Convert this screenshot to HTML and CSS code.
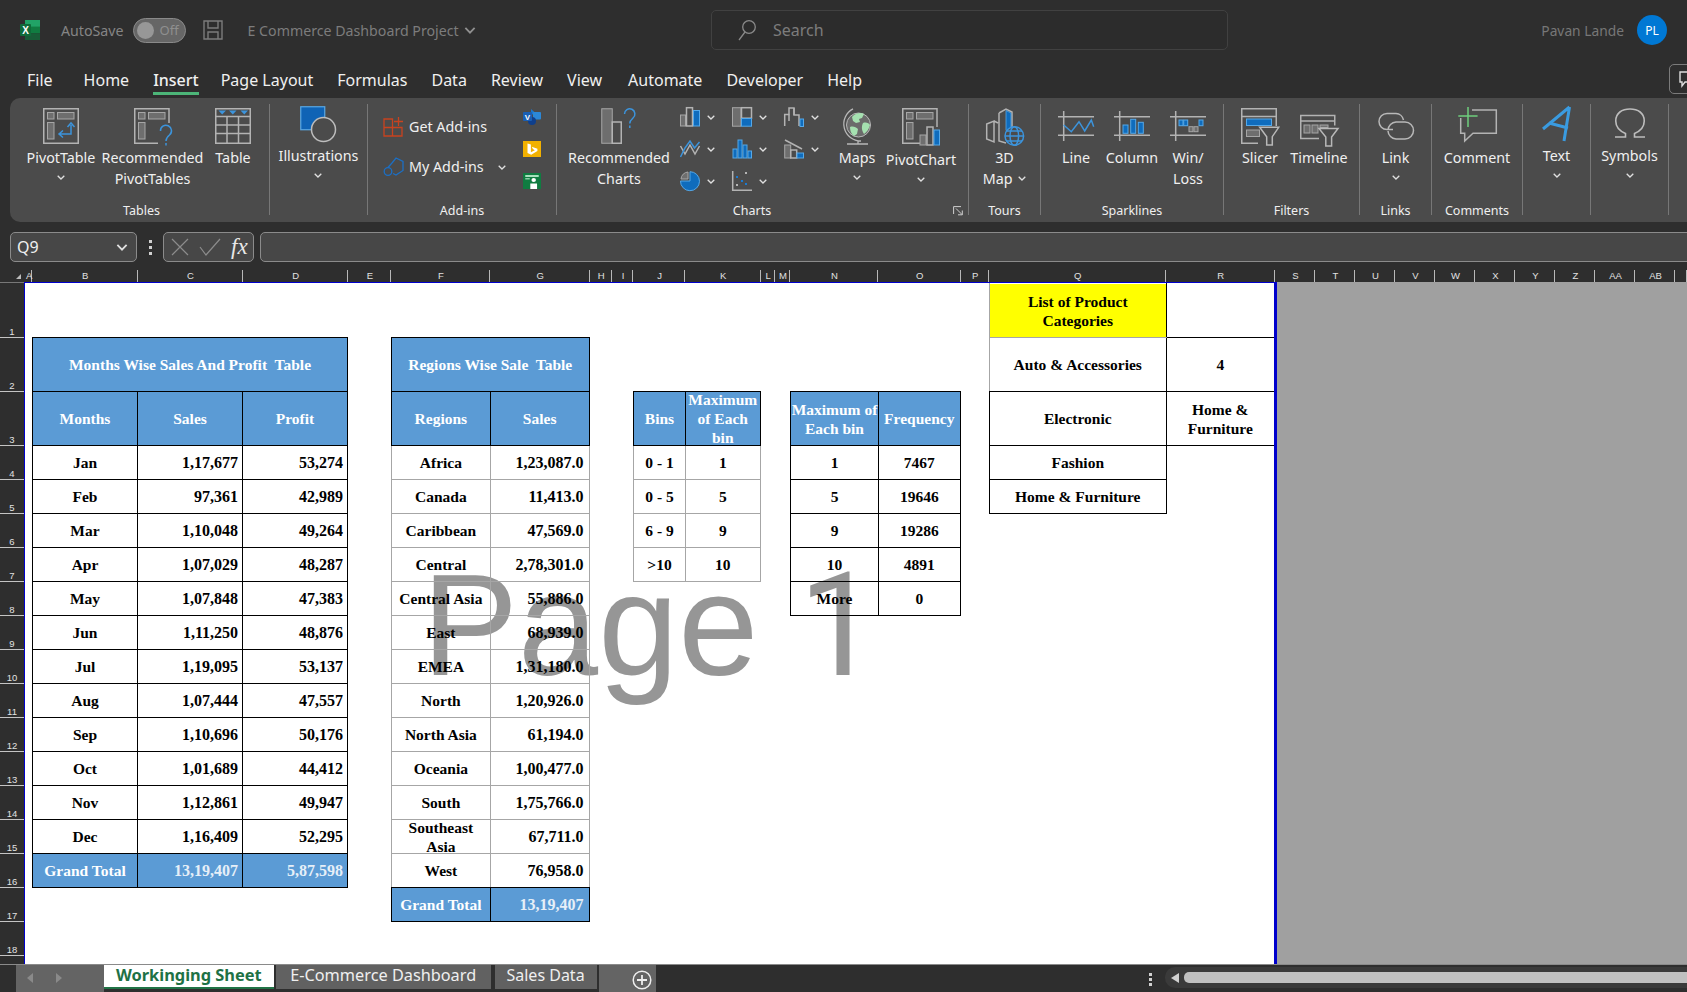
FILE: index.html
```html
<!DOCTYPE html>
<html lang="en">
<head>
    <meta charset="UTF-8">
    <title>E Commerce Dashboard Project - Excel</title>
    <link rel="stylesheet" href="styles.css">
</head>
<body>
    <svg class="defs">
        <symbol id="chev" viewBox="0 0 8 5"><path d="M.7.7 4 4l3.3-3.3" fill="none" stroke="#e0e0e0" stroke-width="1.3"/></symbol>
    </svg>

    <!-- title bar -->
    <header class="titlebar">
        <svg class="logo" viewBox="0 0 20 20" width="20" height="20">
            <rect x="5" y="0" width="15" height="7" fill="#21a366"/>
            <rect x="5" y="6.6" width="15" height="6.8" fill="#107c41"/>
            <rect x="5" y="13.3" width="15" height="6.7" fill="#185c37"/>
            <rect x="0" y="4" width="11" height="12" rx="1" fill="#0f6b3a"/>
            <text x="5.5" y="13.5" text-anchor="middle" class="logo-x">X</text>
        </svg>
        <span class="autosave">AutoSave</span>
        <div class="toggle"><i class="knob"></i><span>Off</span></div>
        <svg class="save" viewBox="0 0 20 20" width="20" height="20">
            <path d="M1 1h18v18H1zM5 1v7h10V1M5 19v-7h10v7" fill="none" stroke="#7c7c7c" stroke-width="1.4"/>
        </svg>
        <span class="doc-title">E Commerce Dashboard Project</span>
        <svg class="doc-chev" width="12" height="7"><use href="#chev"/></svg>
        <div class="searchbox">
            <svg viewBox="0 0 20 22" width="20" height="22">
                <circle cx="12" cy="8" r="6.3" fill="none" stroke="#8a8a8a" stroke-width="1.3"/>
                <path d="M8 13 2 21" stroke="#8a8a8a" stroke-width="1.3"/>
            </svg>
            <span>Search</span>
        </div>
        <span class="username">Pavan Lande</span>
        <div class="avatar">PL</div>
    </header>

    <!-- ribbon tabs -->
    <nav class="tabs">
        <span class="tab">File</span>
        <span class="tab t-home">Home</span>
        <span class="tab active">Insert</span>
        <span class="tab">Page Layout</span>
        <span class="tab">Formulas</span>
        <span class="tab">Data</span>
        <span class="tab">Review</span>
        <span class="tab">View</span>
        <span class="tab t-auto">Automate</span>
        <span class="tab">Developer</span>
        <span class="tab">Help</span>
        <div class="comment-btn">
            <svg viewBox="0 0 18 18" width="18" height="18"><path d="M1 2h15v10H6l-3 4v-4H1z" fill="none" stroke="#ddd" stroke-width="1.4"/></svg>
        </div>
    </nav>

    <!-- ribbon -->
    <section class="ribbon">
        <div class="group g-tables">
            <div class="cmds">
                <div class="cmd c-pivot">
                    <div class="ico">
                        <svg viewBox="0 0 36 38" width="36" height="38">
                            <rect x=".75" y=".75" width="34.5" height="34.5" class="g"/>
                            <rect x="4.5" y="4.5" width="6.5" height="6.5" class="gf"/>
                            <rect x="14.5" y="4.5" width="16.5" height="6.5" class="gf"/>
                            <rect x="4.5" y="14.5" width="6.5" height="16.5" class="gf"/>
                            <path d="M28 17v9H17M24.5 19 28 15l3.5 4M20 22.500 16 26l4 3.500" class="b"/>
                        </svg>
                    </div>
                    <span class="label">PivotTable</span>
                    <svg class="chev" width="8" height="5"><use href="#chev"/></svg>
                </div>
                <div class="cmd c-reco">
                    <div class="ico">
                        <svg viewBox="0 0 38 38" width="38" height="38">
                            <path d="M35 15V.75H.75v34.5H24" class="g"/>
                            <rect x="4.5" y="4.5" width="6.5" height="6.5" class="gf"/>
                            <rect x="14.5" y="4.5" width="16.5" height="6.5" class="gf"/>
                            <rect x="4.5" y="14.5" width="6.5" height="16.5" class="gf"/>
                            <path d="M26.5 23a5.5 5.5 0 1 1 9 4c-2.5 2-3.5 3.5-3.5 6M32 35v2.500" class="b"/>
                        </svg>
                    </div>
                    <span class="label">Recommended<br>PivotTables</span>
                </div>
                <div class="cmd c-table">
                    <div class="ico">
                        <svg viewBox="0 0 36 38" width="36" height="38">
                            <rect x=".75" y=".75" width="34.5" height="34.5" class="g"/>
                            <path d="M1 8.500h34M1 17h34M1 25.500h34M12 8.500v27M23.500 8.500v27" class="g"/>
                            <path d="M3.500 2.500h7.500L7.200 6.500zM14 2.500h7.500l-3.700 4zM25.500 2.500H33l-3.700 4z" fill="#3c94dc"/>
                        </svg>
                    </div>
                    <span class="label">Table</span>
                </div>
            </div>
            <div class="group-label">Tables</div>
        </div>
        <div class="sep"></div>

        <div class="group g-illus">
            <div class="cmds high">
                <div class="cmd c-illus">
                    <div class="ico">
                        <svg viewBox="0 0 36 38" width="36" height="38">
                            <rect x=".75" y=".75" width="24" height="23" fill="#0f63b5" stroke="#5ba8e5" stroke-width="1.2"/>
                            <circle cx="23.500" cy="23.500" r="12" fill="#4b4b4b" stroke="#bdbdbd" stroke-width="1.5"/>
                        </svg>
                    </div>
                    <span class="label">Illustrations</span>
                    <svg class="chev" width="8" height="5"><use href="#chev"/></svg>
                </div>
            </div>
        </div>
        <div class="sep"></div>

        <div class="group g-addins">
            <div class="cmds">
                <div class="addin-list">
                    <div class="addin-row">
                        <svg viewBox="0 0 21 20" width="21" height="20">
                            <path d="M1 2h8.500v17H1zM1 10.500h18V19H9.500M15.500 0v9M11 4.500h9" fill="none" stroke="#c8431f" stroke-width="1.3"/>
                        </svg>
                        <span>Get Add-ins</span>
                    </div>
                    <div class="addin-row">
                        <svg viewBox="0 0 21 20" width="21" height="20">
                            <path d="M9 6 13 1l7 3.500v9L13 18l-3-1.500" fill="none" stroke="#1c6fc4" stroke-width="1.3"/>
                            <circle cx="5" cy="14.500" r="3.800" fill="none" stroke="#1c6fc4" stroke-width="1.3"/>
                            <path d="M5 10.500 9 6" stroke="#1c6fc4" stroke-width="1.3"/>
                        </svg>
                        <span>My Add-ins</span>
                        <svg class="chev-side" width="8" height="5"><use href="#chev"/></svg>
                    </div>
                </div>
                <div class="addin-apps">
                    <svg viewBox="0 0 18 16" width="18" height="16">
                        <path d="M8 0l4 3.500-4 3z" fill="#1b77cf"/>
                        <rect x="10" y="3" width="8" height="7.500" rx="1" fill="#2b88d8"/>
                        <circle cx="9" cy="12" r="4" fill="#0f3f8c"/>
                        <rect x="0" y="3" width="9" height="9" rx="1" fill="#1a5fb4"/>
                        <text x="4.500" y="10.500" text-anchor="middle" class="app-v">V</text>
                    </svg>
                    <svg viewBox="0 0 16 16" width="18" height="16" preserveAspectRatio="none">
                        <rect width="16" height="16" fill="#f2b100"/>
                        <path d="M4 2.500 7 3.500v7.700l3.500-2L8.800 8 7.800 5.700l5 2V10l-5.500 3.800L4 12z" fill="#fff"/>
                    </svg>
                    <svg viewBox="0 0 16 16" width="18" height="16" preserveAspectRatio="none">
                        <rect width="16" height="16" fill="#107c41"/>
                        <rect x="2" y="2" width="12" height="2" fill="#a8e0bd"/>
                        <rect x="2" y="5.200" width="4" height="1.200" fill="#a8e0bd"/>
                        <circle cx="9.500" cy="7" r="2" fill="#fff"/>
                        <path d="M6.500 16v-5.500h6V16z" fill="#fff"/>
                    </svg>
                </div>
            </div>
            <div class="group-label">Add-ins</div>
        </div>
        <div class="sep"></div>

        <div class="group g-charts">
            <div class="cmds">
                <div class="cmd c-recochart">
                    <div class="ico">
                        <svg viewBox="0 0 36 38" width="36" height="38">
                            <rect x=".75" y=".75" width="10.5" height="34.5" class="gf"/>
                            <rect x="11.250" y="14" width="9" height="21.250" class="g"/>
                            <path d="M23.500 6a5.200 5.200 0 1 1 8.500 4c-2.300 2-3.200 3.200-3.200 5.500M28.800 17.500v2.500" class="b"/>
                        </svg>
                    </div>
                    <span class="label">Recommended<br>Charts</span>
                </div>
                <div class="gallery">
                    <div class="gal-item">
                        <svg viewBox="0 0 20 20" width="20" height="20">
                            <rect x=".5" y="8" width="5" height="11" class="gf"/><rect x="6.500" y=".7" width="6" height="18.300" class="g"/><rect x="13.500" y="3.500" width="6" height="15.500" class="bf"/>
                        </svg>
                        <svg class="chev" width="8" height="5"><use href="#chev"/></svg>
                    </div>
                    <div class="gal-item">
                        <svg viewBox="0 0 20 20" width="20" height="20">
                            <rect x=".5" y=".7" width="8.500" height="18.500" class="gf"/><rect x="9.500" y=".7" width="10" height="10.500" class="g"/><rect x="9.500" y="11.500" width="10" height="7.700" class="bf"/>
                        </svg>
                        <svg class="chev" width="8" height="5"><use href="#chev"/></svg>
                    </div>
                    <div class="gal-item">
                        <svg viewBox="0 0 20 20" width="20" height="20">
                            <path d="M.7 19V7.500H5V1h5v7h5v11" class="g"/><path d="M5 7.500V14M10 8V1" class="g"/><rect x="16" y="12" width="3.500" height="7.500" class="bf"/>
                        </svg>
                        <svg class="chev" width="8" height="5"><use href="#chev"/></svg>
                    </div>
                    <div class="gal-item">
                        <svg viewBox="0 0 20 20" width="20" height="20">
                            <path d="M.5 7 5 15l5-9 5 9 4.500-8" class="g"/><path d="M.5 18 5 9l5-7 4.500 7 5-6" class="b"/>
                        </svg>
                        <svg class="chev" width="8" height="5"><use href="#chev"/></svg>
                    </div>
                    <div class="gal-item">
                        <svg viewBox="0 0 20 20" width="20" height="20">
                            <rect x="1" y="10" width="4" height="9" class="bf"/><rect x="6" y="1" width="4" height="18" class="bf"/><rect x="11" y="6" width="4" height="13" class="bf"/><rect x="16" y="12" width="3.500" height="7" class="bf"/>
                        </svg>
                        <svg class="chev" width="8" height="5"><use href="#chev"/></svg>
                    </div>
                    <div class="gal-item">
                        <svg viewBox="0 0 20 20" width="20" height="20">
                            <rect x=".7" y="6" width="6" height="13" class="gf"/><rect x="6.700" y="11" width="6" height="8" class="g"/><rect x="13" y="14" width="6.500" height="5" class="bf"/><path d="M1 1 18 10" class="g"/>
                        </svg>
                        <svg class="chev" width="8" height="5"><use href="#chev"/></svg>
                    </div>
                    <div class="gal-item">
                        <svg viewBox="0 0 20 20" width="20" height="20">
                            <path d="M10 10V.7A9.500 9.500 0 1 1 .5 10z" fill="#0f6cbd" stroke="#55a8e8"/>
                            <path d="M8 8V1A7.500 7.500 0 0 0 1 8z" class="gf"/>
                        </svg>
                        <svg class="chev" width="8" height="5"><use href="#chev"/></svg>
                    </div>
                    <div class="gal-item">
                        <svg viewBox="0 0 20 20" width="20" height="20">
                            <path d="M.7 0v19.300H20" class="g"/>
                            <rect x="4" y="5" width="2" height="2" fill="#1c7ad0"/><rect x="9" y="9" width="2" height="2" fill="#1c7ad0"/><rect x="13" y="1" width="2" height="2" fill="#b5b5b5"/><rect x="4" y="13" width="2" height="2" fill="#b5b5b5"/><rect x="13" y="12" width="2" height="2" fill="#1c7ad0"/>
                        </svg>
                        <svg class="chev" width="8" height="5"><use href="#chev"/></svg>
                    </div>
                    <div class="gal-empty"></div>
                </div>
                <div class="cmd c-maps">
                    <div class="ico">
                        <svg viewBox="0 0 29 38" width="29" height="38">
                            <circle cx="15.500" cy="17" r="12" fill="#6b6b6b" stroke="#b8b8b8"/>
                            <path d="M9 9c3-4 9-5 12-3l-2 4-3 1 1 3-4 1-3-2zM20 15c3-1 6 0 7 2-1 4-3 7-6 9-2-3-3-7-1-11zM7 19c3-1 6 0 8 2l-1 5-3 2c-3-2-4-6-4-9z" fill="#a5e0b0"/>
                            <path d="M10 .9A17 17 0 0 0 18 33M4 36h21M15 33v3" fill="none" stroke="#b8b8b8" stroke-width="1.3"/>
                        </svg>
                    </div>
                    <span class="label">Maps</span>
                    <svg class="chev" width="8" height="5"><use href="#chev"/></svg>
                </div>
                <div class="cmd c-pchart">
                    <div class="ico tall">
                        <svg viewBox="0 0 38 38" width="38" height="38">
                            <path d="M35 19V.75H.75v34.5H18" class="g"/>
                            <rect x="4.5" y="4.5" width="6.5" height="6.5" class="gf"/>
                            <rect x="14.5" y="4.5" width="16.5" height="6.5" class="gf"/>
                            <rect x="4.5" y="14.5" width="6.5" height="16.5" class="gf"/>
                            <rect x="18" y="27" width="6" height="10" class="gf"/><rect x="25" y="19" width="6" height="18" class="g"/><rect x="32" y="22" width="5.5" height="15" class="bf"/>
                        </svg>
                    </div>
                    <span class="label">PivotChart</span>
                    <svg class="chev" width="8" height="5"><use href="#chev"/></svg>
                </div>
            </div>
            <div class="label-row">
                <div class="group-label">Charts</div>
                <svg class="launcher" viewBox="0 0 10 9" width="10" height="9">
                    <path d="M.6 8V.6H8M3 2.500 9 8.500M9.300 4.500v4.300H5" fill="none" stroke="#cfcfcf"/>
                </svg>
            </div>
        </div>
        <div class="sep"></div>

        <div class="group g-tours">
            <div class="cmds">
                <div class="cmd c-map3d">
                    <div class="ico">
                        <svg viewBox="0 0 38 38" width="38" height="38">
                            <path d="M.7 16 8 13v21l-7.300-3zM8 13l4 2M13 5l7-4 6 3v15M13 5v28l7 2" class="g"/>
                            <path d="M20 2.500v20h5V5z" fill="#0f6cbd" stroke="#55a8e8" stroke-width=".8"/>
                            <circle cx="28.300" cy="28" r="9.300" fill="#4b4b4b" stroke="#3c94dc" stroke-width="1.5"/>
                            <ellipse cx="28.300" cy="28" rx="4.300" ry="9.300" class="b"/>
                            <path d="M19 28h18.600M20.500 23h15.600M20.500 33h15.600" class="b"/>
                        </svg>
                    </div>
                    <span class="label">3D<br>Map <svg class="chev-inline" width="8" height="5"><use href="#chev"/></svg></span>
                </div>
            </div>
            <div class="group-label">Tours</div>
        </div>
        <div class="sep"></div>

        <div class="group g-spark">
            <div class="cmds">
                <div class="cmd c-spark">
                    <div class="ico">
                        <svg viewBox="0 0 36 38" width="36" height="38">
                            <path d="M0 8.700h36M0 27.300h36M5.700 3v30" class="g"/>
                            <path d="M5.700 17l7.600 6.700L21 13.700l5.700 9.300 6.600-11 2.400 6.700" class="b"/>
                        </svg>
                    </div>
                    <span class="label">Line</span>
                </div>
                <div class="cmd c-spark">
                    <div class="ico">
                        <svg viewBox="0 0 36 38" width="36" height="38">
                            <path d="M0 8.700h36M0 27.300h36M5.700 3v30" class="g"/>
                            <rect x="9" y="17" width="5" height="8.300" class="bf"/><rect x="16.700" y="11.300" width="5" height="14" class="bf"/><rect x="24.300" y="14.300" width="5" height="11" class="bf"/>
                        </svg>
                    </div>
                    <span class="label">Column</span>
                </div>
                <div class="cmd c-spark">
                    <div class="ico">
                        <svg viewBox="0 0 36 38" width="36" height="38">
                            <path d="M0 8.700h36M0 27.300h36M5.700 3v30" class="g"/>
                            <rect x="9" y="12" width="4" height="5.700" class="bf"/><rect x="13.700" y="12" width="4" height="5.700" class="bf"/><rect x="19" y="18.700" width="4" height="5" class="gf"/><rect x="24" y="18.700" width="4" height="5" class="gf"/><rect x="29" y="12" width="4" height="5.700" class="bf"/>
                        </svg>
                    </div>
                    <span class="label">Win/<br>Loss</span>
                </div>
            </div>
            <div class="group-label">Sparklines</div>
        </div>
        <div class="sep"></div>

        <div class="group g-filters">
            <div class="cmds">
                <div class="cmd c-slicer">
                    <div class="ico">
                        <svg viewBox="0 0 38 38" width="38" height="38">
                            <path d="M17 35.200H.75V.75h34.5V18M1 8.500h34" class="g"/>
                            <rect x="5.500" y="11" width="25" height="6.500" class="bf"/>
                            <rect x="5.500" y="22" width="13" height="6.500" class="gf"/>
                            <path d="M18.700 19.300h19l-6.400 9.400V37h-5.600v-8.300z" fill="#4b4b4b" stroke="#b8b8b8" stroke-width="1.5"/>
                        </svg>
                    </div>
                    <span class="label">Slicer</span>
                </div>
                <div class="cmd c-timeline">
                    <div class="ico">
                        <svg viewBox="0 0 38 38" width="38" height="38">
                            <path d="M19 30.500H.75V7.500h34v10M1 13h34" class="g"/>
                            <rect x="4" y="17" width="6" height="8" class="gf"/>
                            <rect x="12" y="17" width="6" height="8" class="gf"/>
                            <rect x="20" y="17" width="8" height="2.500" class="gf"/>
                            <path d="M19 20.500h19l-6.400 8.500V38h-5.800v-9z" fill="#4b4b4b" stroke="#b8b8b8" stroke-width="1.5"/>
                        </svg>
                    </div>
                    <span class="label">Timeline</span>
                </div>
            </div>
            <div class="group-label">Filters</div>
        </div>
        <div class="sep"></div>

        <div class="group g-links">
            <div class="cmds">
                <div class="cmd c-full">
                    <div class="ico">
                        <svg viewBox="0 0 36 38" width="36" height="38">
                            <path d="M15 21.500H9a8 8 0 0 1 0-16h9a8 8 0 0 1 7.500 6.500" fill="none" stroke="#b8b8b8" stroke-width="1.5"/>
                            <path d="M10 22a8.500 8.500 0 0 1 8-8h9a8.500 8.500 0 0 1 0 17h-9a8.500 8.500 0 0 1-8-8" fill="none" stroke="#b8b8b8" stroke-width="1.5"/>
                        </svg>
                    </div>
                    <span class="label">Link</span>
                    <svg class="chev" width="8" height="5"><use href="#chev"/></svg>
                </div>
            </div>
            <div class="group-label">Links</div>
        </div>
        <div class="sep"></div>

        <div class="group g-comments">
            <div class="cmds">
                <div class="cmd c-full">
                    <div class="ico">
                        <svg viewBox="0 0 39 38" width="39" height="38">
                            <path d="M14 2h24.300v23.300H15L6.700 33v-7.700H2.700V10" class="g"/>
                            <path d="M10-1v20M.3 8h19.300" fill="none" stroke="#6fce7e" stroke-width="1.5"/>
                        </svg>
                    </div>
                    <span class="label">Comment</span>
                </div>
            </div>
            <div class="group-label">Comments</div>
        </div>
        <div class="sep"></div>

        <div class="group g-text">
            <div class="cmds high">
                <div class="cmd c-full">
                    <div class="ico">
                        <svg viewBox="0 0 29 38" width="29" height="38">
                            <path d="M27.500 1 22 35M27.500 1 1 23M7 17l19 5" fill="none" stroke="#3a9be0" stroke-width="3"/>
                        </svg>
                    </div>
                    <span class="label">Text</span>
                    <svg class="chev" width="8" height="5"><use href="#chev"/></svg>
                </div>
            </div>
        </div>
        <div class="sep"></div>

        <div class="group g-symbols">
            <div class="cmds high">
                <div class="cmd c-full">
                    <div class="ico">
                        <svg viewBox="0 0 30 38" width="30" height="38">
                            <path d="M0 31h10.500v-3.500C3.500 24.500.75 19.500.75 15 .75 7 7 3 15 3s14.250 4 14.250 12c0 4.500-2.750 9.500-9.750 12.500V31H30" fill="none" stroke="#bdbdbd" stroke-width="1.6"/>
                        </svg>
                    </div>
                    <span class="label">Symbols</span>
                    <svg class="chev" width="8" height="5"><use href="#chev"/></svg>
                </div>
            </div>
        </div>
        <div class="sep"></div>
    </section>

    <!-- formula bar -->
    <div class="formula-bar">
        <div class="namebox"><span>Q9</span><svg width="12" height="7"><use href="#chev"/></svg></div>
        <div class="fb-dots"><i></i><i></i><i></i></div>
        <div class="fb-actions">
            <svg viewBox="0 0 18 18" width="18" height="18"><path d="M1 1l16 16M17 1 1 17" stroke="#8c8c8c" stroke-width="1.2"/></svg>
            <svg viewBox="0 0 22 18" width="22" height="18"><path d="M1 9l6 8L21 1" fill="none" stroke="#8c8c8c" stroke-width="1.2"/></svg>
            <span class="fx">fx</span>
        </div>
        <div class="fb-input"></div>
    </div>

    <!-- sheet -->
    <main class="sheet">
        <div class="col-head">
            <div class="corner"><svg width="5" height="5"><path d="M5 0v5H0z" fill="#bbb"/></svg></div>
            <span>A</span><span>B</span><span>C</span><span>D</span><span>E</span><span>F</span><span>G</span><span>H</span><span>I</span><span>J</span><span>K</span><span>L</span><span>M</span><span>N</span><span>O</span><span>P</span><span>Q</span><span>R</span><span>S</span><span>T</span><span>U</span><span>V</span><span>W</span><span>X</span><span>Y</span><span>Z</span><span>AA</span><span>AB</span><span></span>
        </div>
        <div class="sheet-body">
            <div class="row-head">
                <span>1</span><span>2</span><span>3</span><span>4</span><span>5</span><span>6</span><span>7</span><span>8</span><span>9</span><span>10</span><span>11</span><span>12</span><span>13</span><span>14</span><span>15</span><span>16</span><span>17</span><span>18</span><span></span>
            </div>
            <div class="page">
                <div class="watermark">Page <span class="wm-one">1</span></div>

                <div class="block b-months">
                    <table class="xl">
                        <tr class="h54"><th colspan="3">Months Wise Sales And Profit&nbsp; Table</th></tr>
                        <tr class="h54"><th>Months</th><th>Sales</th><th>Profit</th></tr>
                        <tr><td>Jan</td><td class="num">1,17,677</td><td class="num">53,274</td></tr>
                        <tr><td>Feb</td><td class="num">97,361</td><td class="num">42,989</td></tr>
                        <tr><td>Mar</td><td class="num">1,10,048</td><td class="num">49,264</td></tr>
                        <tr><td>Apr</td><td class="num">1,07,029</td><td class="num">48,287</td></tr>
                        <tr><td>May</td><td class="num">1,07,848</td><td class="num">47,383</td></tr>
                        <tr><td>Jun</td><td class="num">1,11,250</td><td class="num">48,876</td></tr>
                        <tr><td>Jul</td><td class="num">1,19,095</td><td class="num">53,137</td></tr>
                        <tr><td>Aug</td><td class="num">1,07,444</td><td class="num">47,557</td></tr>
                        <tr><td>Sep</td><td class="num">1,10,696</td><td class="num">50,176</td></tr>
                        <tr><td>Oct</td><td class="num">1,01,689</td><td class="num">44,412</td></tr>
                        <tr><td>Nov</td><td class="num">1,12,861</td><td class="num">49,947</td></tr>
                        <tr><td>Dec</td><td class="num">1,16,409</td><td class="num">52,295</td></tr>
                        <tr class="total"><td>Grand Total</td><td class="num">13,19,407</td><td class="num">5,87,598</td></tr>
                    </table>
                </div>

                <div class="block b-regions">
                    <table class="xl light">
                        <tr class="h54"><th colspan="2">Regions Wise Sale&nbsp; Table</th></tr>
                        <tr class="h54"><th>Regions</th><th>Sales</th></tr>
                        <tr><td>Africa</td><td class="num">1,23,087.0</td></tr>
                        <tr><td>Canada</td><td class="num">11,413.0</td></tr>
                        <tr><td>Caribbean</td><td class="num">47,569.0</td></tr>
                        <tr><td>Central</td><td class="num">2,78,301.0</td></tr>
                        <tr><td>Central Asia</td><td class="num">55,886.0</td></tr>
                        <tr><td>East</td><td class="num">68,939.0</td></tr>
                        <tr><td>EMEA</td><td class="num">1,31,180.0</td></tr>
                        <tr><td>North</td><td class="num">1,20,926.0</td></tr>
                        <tr><td>North Asia</td><td class="num">61,194.0</td></tr>
                        <tr><td>Oceania</td><td class="num">1,00,477.0</td></tr>
                        <tr><td>South</td><td class="num">1,75,766.0</td></tr>
                        <tr><td><div class="clip small">Southeast<br>Asia</div></td><td class="num">67,711.0</td></tr>
                        <tr class="before-total"><td>West</td><td class="num">76,958.0</td></tr>
                        <tr class="total"><td>Grand Total</td><td class="num">13,19,407</td></tr>
                    </table>
                </div>

                <div class="block b-bins">
                    <table class="xl light">
                        <colgroup><col class="col-bins"><col></colgroup>
                        <tr class="h54"><th>Bins</th><th><div class="clip">Maximum<br>of Each<br>bin</div></th></tr>
                        <tr><td>0 - 1</td><td>1</td></tr>
                        <tr><td>0 - 5</td><td>5</td></tr>
                        <tr><td>6 - 9</td><td>9</td></tr>
                        <tr><td>&gt;10</td><td>10</td></tr>
                    </table>
                </div>

                <div class="block b-freq">
                    <table class="xl">
                        <colgroup><col class="col-max"><col></colgroup>
                        <tr class="h54"><th>Maximum of<br>Each bin</th><th>Frequency</th></tr>
                        <tr><td>1</td><td>7467</td></tr>
                        <tr><td>5</td><td>19646</td></tr>
                        <tr><td>9</td><td>19286</td></tr>
                        <tr><td>10</td><td>4891</td></tr>
                        <tr><td>More</td><td>0</td></tr>
                    </table>
                </div>

                <div class="block b-cats">
                    <table class="xl cats">
                        <colgroup><col class="col-cat"><col></colgroup>
                        <tr class="h54"><td class="yellow">List of Product<br>Categories</td><td class="first-r"></td></tr>
                        <tr class="h54"><td class="auto">Auto &amp; Accessories</td><td class="edge">4</td></tr>
                        <tr class="h54"><td>Electronic</td><td class="edge">Home &amp;<br>Furniture</td></tr>
                        <tr><td>Fashion</td><td class="blank"></td></tr>
                        <tr><td>Home &amp; Furniture</td><td class="blank"></td></tr>
                    </table>
                </div>
            </div>
            <div class="offpage"></div>
        </div>
    </main>

    <!-- sheet tabs and scroll bar -->
    <footer class="tabbar">
        <div class="tab-nav">
            <svg width="6" height="10"><path d="M6 0v10L0 5z" fill="#8a8a8a"/></svg>
            <svg width="6" height="10"><path d="M0 0v10l6-5z" fill="#8a8a8a"/></svg>
        </div>
        <div class="sheet-tab current">Workinging Sheet</div>
        <div class="sheet-tab t-ecom">E-Commerce Dashboard</div>
        <div class="sheet-tab t-sales">Sales Data</div>
        <div class="add-sheet">
            <svg viewBox="0 0 20 20" width="20" height="20">
                <circle cx="10" cy="10" r="8.800" fill="none" stroke="#eee" stroke-width="1.5"/>
                <path d="M10 5v10M5 10h10" stroke="#eee" stroke-width="1.8"/>
            </svg>
        </div>
        <div class="scroll-dots"><i></i><i></i><i></i></div>
        <div class="scrollbar">
            <svg width="8" height="10"><path d="M8 0v10L0 5z" fill="#d0d0d0"/></svg>
            <div class="thumb"></div>
        </div>
    </footer>
</body>
</html>
```

FILE: styles.css
```css
* {
    box-sizing: border-box;
}
html, body {
    margin: 0;
    height: 992px;
    overflow: hidden;
}
body {
    width: 1687px;
    background: #2e2e2e;
    font-family: "Noto Sans", "Open Sans", sans-serif;
    color: #f0f0f0;
}
.defs {
    display: none;
}
svg {
    display: block;
    flex: none;
    overflow: visible;
}

/* title bar */
.titlebar {
    height: 60px;
    display: flex;
    align-items: center;
    padding-left: 20px;
    font-size: 14.2px;
    color: #858585;
}
.logo-x {
    font: bold 10px "Liberation Sans", sans-serif;
    fill: #fff;
}
.autosave {
    margin-left: 21px;
}
.toggle {
    width: 53px;
    height: 25px;
    margin-left: 9px;
    border: 1px solid #8a8a8a;
    border-radius: 13px;
    background: #666;
    display: flex;
    align-items: center;
    padding-left: 3px;
    gap: 6px;
    font-size: 13px;
    color: #8f8f8f;
}
.knob {
    width: 17px;
    height: 17px;
    border-radius: 50%;
    background: #979797;
}
.save {
    margin-left: 17px;
}
.doc-title {
    margin-left: 25px;
    color: #7c7c7c;
}
.doc-chev {
    margin-left: 5px;
    opacity: .55;
}
.searchbox {
    position: absolute;
    left: 711px;
    top: 10px;
    width: 517px;
    height: 40px;
    border: 1px solid #414141;
    border-radius: 5px;
    background: #2c2c2c;
    display: flex;
    align-items: center;
    padding-left: 25px;
    gap: 16px;
    font-size: 16px;
    color: #7c7c7c;
}
.username {
    margin-left: auto;
    font-size: 13.8px;
    color: #777;
}
.avatar {
    width: 30px;
    height: 30px;
    margin: 0 20px 0 13px;
    border-radius: 50%;
    background: #0078d4;
    color: #fff;
    font-size: 12px;
    display: flex;
    align-items: center;
    justify-content: center;
}

/* tabs */
.tabs {
    height: 38px;
    display: flex;
    gap: 24px;
    padding-left: 27px;
    font-size: 16px;
    position: relative;
}
.tab {
    height: 35px;
    padding-top: 8px;
    line-height: 24px;
    border-bottom: 3px solid transparent;
}
.t-home {
    margin-left: 7px;
}
.t-auto {
    margin-left: 2px;
}
.tab.active {
    border-bottom-color: #4cb578;
    font-weight: 500;
    margin-right: -2px;
}
.comment-btn {
    position: absolute;
    left: 1669px;
    top: 4px;
    width: 40px;
    height: 30px;
    border: 1px solid #7b7b7b;
    border-radius: 5px;
    padding: 5px 0 0 9px;
}

/* ribbon */
.ribbon {
    height: 124px;
    margin-left: 10px;
    border-radius: 10px 0 0 10px;
    background: #4b4b4b;
    display: flex;
    font-size: 14.3px;
    line-height: 20.5px;
}
.sep {
    width: 1px;
    margin: 6px 0 7px;
    background: #777;
}
.group {
    display: flex;
    flex-direction: column;
    justify-content: space-between;
}
.group-label {
    height: 22px;
    line-height: 22px;
    font-size: 12.5px;
    text-align: center;
    color: #efefef;
}
.cmds {
    display: flex;
    padding-top: 10px;
}
.cmds.high {
    padding-top: 8px;
    justify-content: center;
}
.cmd {
    display: flex;
    flex-direction: column;
    align-items: center;
    text-align: center;
}
.ico {
    height: 36px;
    margin-bottom: 4px;
}
.ico.tall {
    height: 38px;
}
.chev {
    width: 8px;
    height: 5px;
    margin-top: 6.5px;
}
.chev-inline {
    display: inline-block;
    vertical-align: 3px;
    margin-left: 2px;
}

.g-tables { width: 259px; padding-left: 16px; }
.g-tables .group-label { padding-right: 12px; }
.g-illus { width: 97px; }
.g-addins { width: 188px; }
.g-charts { width: 411px; }
.g-tours { width: 71px; }
.g-spark { width: 182px; }
.g-filters { width: 135px; }
.g-links { width: 71px; }
.g-comments { width: 90px; }
.g-text { width: 67px; }
.g-symbols { width: 77px; }
.c-full { width: 100%; }

.c-pivot { width: 70px; }
.c-reco { width: 105px; margin-left: 4px; }
.c-table { width: 48px; margin-left: 4px; }

.g-addins .cmds { padding-left: 15px; padding-top: 9px; }
.addin-list {
    width: 140px;
}
.addin-row {
    height: 40px;
    display: flex;
    align-items: center;
    gap: 5px;
}
.chev-side {
    margin-left: 9px;
}
.addin-apps {
    display: flex;
    flex-direction: column;
    gap: 16px;
    margin-top: 2px;
}

.g-charts .cmds { padding-left: 9px; }
.c-recochart { width: 106px; }
.gallery {
    display: grid;
    grid-template-columns: repeat(3, 52px);
    grid-auto-rows: 32px;
    margin: -7px 0 0 8px;
}
.gal-item {
    display: flex;
    align-items: center;
    gap: 7px;
}
.gal-item .chev {
    margin-top: 0;
}
.c-maps { width: 40px; margin-left: 1px; }
.c-pchart { width: 70px; margin-left: 9px; }
.label-row {
    display: flex;
    justify-content: space-between;
}
.label-row .group-label {
    width: 390px;
}
.launcher {
    margin: 6px 5px 0 0;
}

.c-map3d { width: 71px; }
.g-spark .cmds { padding-left: 7px; }
.c-spark { width: 56px; }
.g-filters .cmds { padding-left: 14px; }
.c-slicer { width: 44px; }
.c-timeline { width: 62px; margin-left: 6px; }

/* formula bar */
.formula-bar {
    height: 48px;
    padding: 10px 0 8px 10px;
    display: flex;
}
.namebox, .fb-actions, .fb-input {
    flex: none;
    height: 30px;
    border: 1px solid #8b8b8b;
    border-radius: 5px;
    background: #474747;
    display: flex;
    align-items: center;
}
.namebox {
    width: 127px;
    padding: 0 8px 0 6px;
    justify-content: space-between;
    font-size: 16px;
}
.fb-dots {
    flex: none;
    width: 26px;
    display: flex;
    flex-direction: column;
    align-items: center;
    gap: 3px;
    padding-top: 8px;
}
.fb-dots i {
    width: 3px;
    height: 3px;
    background: #d0d0d0;
}
.fb-actions {
    width: 91px;
    padding-left: 7px;
    gap: 10px;
}
.fx {
    font: italic 23px "Liberation Serif", serif;
    color: #e8e8e8;
}
.fb-input {
    width: 1440px;
    margin-left: 6px;
}

/* sheet */
.sheet {
    --rows: 55px 54px 54px repeat(15, 34px) 9px;
    height: 694px;
}
.col-head {
    height: 12px;
    display: grid;
    grid-template-columns: 24px 8px 105.5px 105px 105.5px 43px 99px 99.5px 22.5px 21px 52px 75.5px 14.5px 15px 88px 82.5px 28.5px 176.5px 109.5px repeat(10, 40px) 1fr;
    background: #2e2e2e;
    font: 9.5px/11px "Liberation Sans", sans-serif;
    color: #e2e2e2;
    text-align: center;
}
.col-head span {
    border-right: 1px solid #b8b8b8;
    padding-left: 2px;
}
.corner {
    padding: 4px 0 0 16px;
}
.sheet-body {
    height: 682px;
    display: flex;
    overflow: hidden;
}
.row-head {
    width: 24px;
    display: grid;
    grid-template-rows: var(--rows);
    font: 9.5px/11px "Liberation Sans", sans-serif;
    color: #e2e2e2;
    text-align: center;
    border-top: 1px solid #777;
}
.row-head span {
    display: flex;
    align-items: flex-end;
    justify-content: center;
    border-bottom: 1px solid #c4c4c4;
}
.page {
    width: 1253px;
    position: relative;
    background: #fff;
    border: solid #0000cc;
    border-width: 1px 3px 0 1px;
    display: grid;
    grid-template-columns: 7px 105.5px 105px 105.5px 43px 99px 99.5px 22.5px 21px 52px 75.5px 14.5px 15px 88px 82.5px 28.5px 176.5px 108.5px;
    grid-template-rows: 54px 54px 54px repeat(15, 34px) 9px;
}
.offpage {
    flex: 1;
    background: #a0a0a0;
}
.watermark {
    position: absolute;
    left: 397px;
    top: 271px;
    font: 144px/1 "Liberation Sans", sans-serif;
    color: #969696;
    white-space: nowrap;
}
.wm-one {
    font-family: Roboto, sans-serif;
}

/* tables on the sheet */
.block {
    position: relative;
}
.b-months { grid-column: 2 / 5; grid-row: 2 / 17; }
.b-regions { grid-column: 6 / 8; grid-row: 2 / 18; }
.b-bins { grid-column: 10 / 12; grid-row: 3 / 8; }
.b-freq { grid-column: 14 / 16; grid-row: 3 / 9; }
.b-cats { grid-column: 17 / 19; grid-row: 1 / 7; }

.xl {
    width: 100%;
    table-layout: fixed;
    border-collapse: collapse;
    font: bold 15.5px/19px "Liberation Serif", serif;
    color: #000;
    text-align: center;
}
.xl td, .xl th {
    height: 34px;
    padding: 0;
    border: 1px solid #000;
}
.xl .h54 td, .xl .h54 th {
    height: 54px;
}
.xl th, .xl .total td {
    background: #5b9bd5;
    color: #fff;
    font-weight: bold;
}
.xl .total .num {
    color: #e6eff8;
}
.xl .num {
    text-align: right;
    padding-right: 4px;
    font-size: 16px;
}
/* text taller than its row spills over the borders, as it does in the grid */
.clip {
    height: 52px;
    display: flex;
    flex-direction: column;
    justify-content: center;
}
.clip.small {
    height: 32px;
}
.light td {
    border-color: #a6a6a6;
}
.light .num {
    padding-right: 5px;
}
.light .before-total td {
    border-bottom-color: #000;
}
.light .total td {
    border-color: #000;
}
.col-bins { width: 52px; }
.col-max { width: 88px; }
.col-cat { width: 176.5px; }
.cats td {
    border-color: #000;
}
.cats .yellow {
    background: #ff0;
    border-color: transparent #000 #a6a6a6 #a6a6a6;
}
.cats .first-r {
    border-width: 0 0 1px 1px;
}
.cats .auto {
    border-left-color: #a6a6a6;
    border-top-color: #a6a6a6;
}
.cats .edge {
    border-right: 0;
}
.cats .blank {
    border: 0;
    border-left: 1px solid #000;
}

/* tab bar */
.tabbar {
    height: 28px;
    display: flex;
    align-items: flex-start;
    border-top: 1px solid #8a8a8a;
    padding-left: 16px;
    font-size: 16px;
}
.tab-nav {
    width: 88px;
    height: 27px;
    background: #646464;
    display: flex;
    align-items: center;
    gap: 23px;
    padding: 0 0 2px 11px;
}
.sheet-tab {
    height: 24px;
    line-height: 20px;
    text-align: center;
    background: #616161;
    color: #efefef;
}
.sheet-tab.current {
    width: 170px;
    background: #fff;
    color: #1e7145;
    font-weight: 700;
    font-size: 16.4px;
    border-bottom: 2px solid #217346;
}
.t-ecom {
    width: 215px;
    margin-left: 2px;
    font-size: 16.3px;
}
.t-sales {
    width: 102px;
    margin-left: 4px;
}
.add-sheet {
    width: 58px;
    height: 27px;
    margin-left: 2px;
    background: #646464;
    padding: 5px 0 0 33px;
}
.scroll-dots {
    margin-left: 493px;
    padding-top: 8px;
    display: flex;
    flex-direction: column;
    gap: 2px;
}
.scroll-dots i {
    width: 3px;
    height: 3px;
    background: #d0d0d0;
}
.scrollbar {
    margin-left: 13px;
    margin-top: 2px;
    width: 522px;
    height: 21px;
    background: #3a3a3a;
    border-radius: 10px 0 0 10px;
    display: flex;
    align-items: center;
    padding-left: 6px;
    gap: 5px;
}
.thumb {
    flex: 1;
    height: 11px;
    background: #c0c0c0;
    border-radius: 5px 0 0 5px;
}

/* icon strokes */
.g {
    fill: none;
    stroke: #b3b3b3;
    stroke-width: 1.5;
}
.gf {
    fill: #6e6e6e;
    stroke: #a6a6a6;
    stroke-width: 1;
}
.b {
    fill: none;
    stroke: #3c94dc;
    stroke-width: 1.5;
}
.bf {
    fill: #0f6cbd;
    stroke: #55a8e8;
    stroke-width: 1;
}
.app-v {
    font: bold 8px "Liberation Sans", sans-serif;
    fill: #fff;
}
```
